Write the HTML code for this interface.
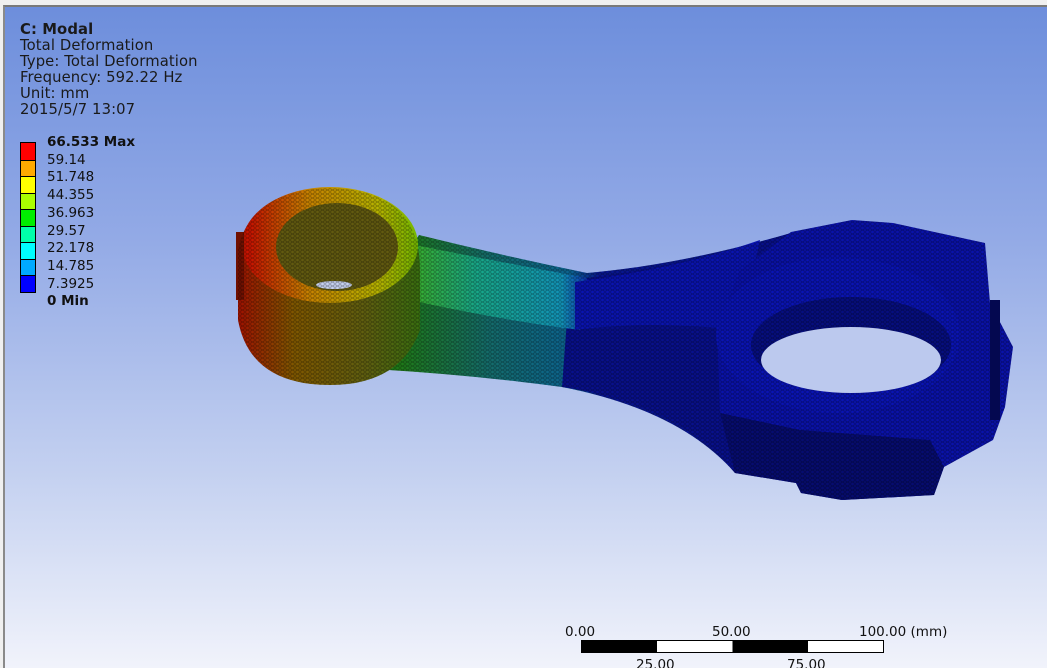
<!DOCTYPE html>
<html><head><meta charset="utf-8"><style>
html,body{margin:0;padding:0;width:1047px;height:668px;overflow:hidden;background:#f0f0f0;font-family:"DejaVu Sans","Liberation Sans",sans-serif}
#v{position:absolute;left:3px;top:5px;width:1044px;height:663px;border-top:2px solid #7a7a7a;border-left:2px solid #8a8a8a;box-sizing:border-box;background:linear-gradient(to bottom,#6d8edc 0%,#93aae6 35%,#c3d0f0 70%,#f1f3fb 100%);overflow:hidden}
.t{position:absolute;left:15px;font-size:14.8px;line-height:16px;color:#1a1a1a;letter-spacing:0.1px}
.lg{position:absolute;left:15px;top:135px}
.lg div.s{width:16px;height:16.5px;border-left:1px solid #000;border-right:1px solid #000;box-sizing:border-box}
.lb{position:absolute;left:42px;font-size:13.5px;color:#111;line-height:17.7px}
.sc{position:absolute;font-size:13.5px;color:#111}
</style></head><body>
<div id="v">
<div class="t" style="top:15px"><b>C: Modal</b><br>Total Deformation<br>Type: Total Deformation<br>Frequency: 592.22 Hz<br>Unit: mm<br>2015/5/7 13:07</div>
<div class="lg" style="top:135px;border-top:1px solid #000;border-bottom:1px solid #000">
<div class="s" style="background:#ff0000"></div><div class="s" style="background:#ffaa00;border-top:1px solid #000"></div><div class="s" style="background:#ffff00;border-top:1px solid #000"></div><div class="s" style="background:#aaff00;border-top:1px solid #000"></div><div class="s" style="background:#00ee00;border-top:1px solid #000"></div><div class="s" style="background:#00ffaa;border-top:1px solid #000"></div><div class="s" style="background:#00ffff;border-top:1px solid #000"></div><div class="s" style="background:#00aaff;border-top:1px solid #000"></div><div class="s" style="background:#0000ff;border-top:1px solid #000"></div>
</div>
<div class="lb" style="top:127px"><b>66.533 Max</b><br>59.14<br>51.748<br>44.355<br>36.963<br>29.57<br>22.178<br>14.785<br>7.3925<br><b>0 Min</b></div>
<svg width="1044" height="663" style="position:absolute;left:-2px;top:-2px" viewBox="3 5 1044 663">
<defs>
<linearGradient id="sh" x1="400" y1="0" x2="600" y2="0" gradientUnits="userSpaceOnUse"><stop offset="0" stop-color="#1f7a18"/><stop offset="0.45" stop-color="#146c6c"/><stop offset="0.85" stop-color="#0c6490"/><stop offset="1" stop-color="#081690"/></linearGradient>
<linearGradient id="se" x1="240" y1="0" x2="420" y2="0" gradientUnits="userSpaceOnUse"><stop offset="0" stop-color="#a01400"/><stop offset="0.3" stop-color="#805800"/><stop offset="0.7" stop-color="#606010"/><stop offset="1" stop-color="#3a7010"/></linearGradient>
<linearGradient id="top" x1="250" y1="0" x2="420" y2="0" gradientUnits="userSpaceOnUse"><stop offset="0" stop-color="#c81400"/><stop offset="0.35" stop-color="#c88400"/><stop offset="0.75" stop-color="#b8b400"/><stop offset="1" stop-color="#70b800"/></linearGradient>
<linearGradient id="st" x1="400" y1="0" x2="590" y2="0" gradientUnits="userSpaceOnUse"><stop offset="0" stop-color="#40b018"/><stop offset="0.4" stop-color="#18a888"/><stop offset="0.85" stop-color="#1294b8"/><stop offset="1" stop-color="#0c28b0"/></linearGradient>
<pattern id="mesh" width="5" height="4" patternUnits="userSpaceOnUse"><path d="M0,0 L5,4 M0,4 L5,0 M0,2 H5" stroke="#000" stroke-width="0.6" opacity="0.35"/></pattern>
<clipPath id="cl">
<path d="M332,367 Q450,372 562,387 Q680,410 735,473 L730,300 L791,233 Q680,265 587,273 Q500,255 419,235 Z"/>
<path d="M238,290 L238,250 Q250,190 330,188 Q420,190 420,270 L420,330 Q400,385 330,385 Q250,385 238,320 Z"/>
<path d="M791,232 L852,220 L893,223 L985,243 L990,303 L1013,347 L1005,407 L993,440 L944,467 L934,495 L842,500 L801,493 L796,483 L735,473 L720,413 L717,330 L740,270 Z"/>
</clipPath>
</defs>
<path d="M332,367 Q450,372 562,387 Q680,410 735,473 L730,300 L791,233 Q680,265 587,273 Q500,255 419,235 Z" fill="url(#sh)"/>
<path d="M570,280 Q680,268 791,233 L760,330 L735,473 Q680,405 562,387 Z" fill="#08108c"/>
<path d="M415,245 Q500,262 587,278 L580,330 Q500,320 410,300 Z" fill="url(#st)"/>
<path d="M575,282 Q680,268 760,240 L740,330 Q650,320 575,330 Z" fill="#0a14b0"/>
<path d="M238,290 L238,250 Q250,190 330,188 Q420,190 420,270 L420,330 Q400,385 330,385 Q250,385 238,320 Z" fill="url(#se)"/>
<ellipse cx="330" cy="245" rx="88" ry="58" fill="url(#top)"/>
<ellipse cx="337" cy="247" rx="61" ry="44" fill="#625a10"/>
<ellipse cx="334" cy="285" rx="18" ry="4" fill="#c7d2f0"/>
<rect x="236" y="232" width="8" height="68" fill="#701000"/>
<path d="M791,232 L852,220 L893,223 L985,243 L990,303 L1013,347 L1005,407 L993,440 L944,467 L934,495 L842,500 L801,493 L796,483 L735,473 L720,413 L717,330 L740,270 Z" fill="#0a12aa"/>
<path d="M735,473 L720,413 L800,430 L930,440 L944,467 L934,495 L842,500 L801,493 L796,483 Z" fill="#060c70"/>
<ellipse cx="838" cy="335" rx="122" ry="78" fill="#0a14b4"/>
<ellipse cx="851" cy="345" rx="100" ry="48" fill="#060e80"/>
<rect x="200" y="180" width="840" height="330" fill="url(#mesh)" clip-path="url(#cl)"/>
<ellipse cx="851" cy="360" rx="90" ry="33" fill="#bcc9ee"/>
<rect x="990" y="300" width="10" height="120" fill="#040850"/>
</svg>
<div class="sc" style="left:560px;top:617px">0.00</div>
<div class="sc" style="left:707px;top:617px">50.00</div>
<div class="sc" style="left:854px;top:617px">100.00 (mm)</div>
<div style="position:absolute;left:576px;top:633px;width:303px;height:13px;border:1px solid #000;box-sizing:border-box;background:linear-gradient(to right,#000 0 25%,#fff 25% 50%,#000 50% 75%,#fff 75%)"></div>
<div class="sc" style="left:631px;top:650px">25.00</div>
<div class="sc" style="left:782px;top:650px">75.00</div>
</div>
</body></html>
